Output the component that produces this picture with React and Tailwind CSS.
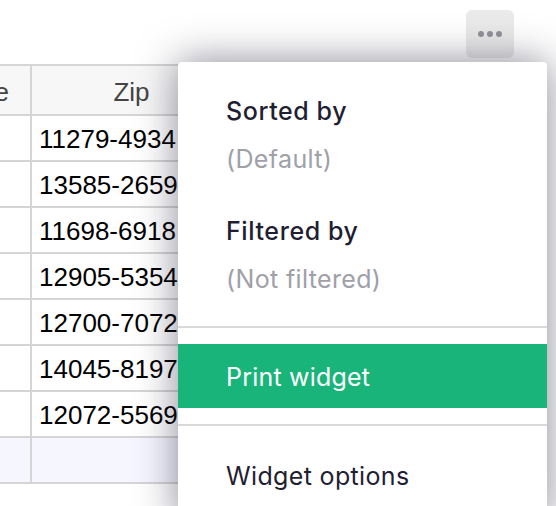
const zips = ['11279-4934', '13585-2659', '11698-6918', '12905-5354', '12700-7072', '14045-8197', '12072-5569'];

function Row({ zip }) {
  return (
    <div className="flex h-[46px] border-b-2 border-[#d5d5d5]">
      <div className="w-[32px] shrink-0 border-r-2 border-[#d5d5d5]" />
      <div className="flex-1 pl-[7px] text-[26px] leading-[46px] text-black">{zip}</div>
    </div>
  );
}

export default function App() {
  return (
    <div className="relative h-[506px] w-[556px] overflow-hidden bg-white font-['Liberation_Sans',sans-serif]">
      {/* table behind the menu */}
      <div className="w-[240px] pt-[64px]">
        <div className="flex h-[52px] border-y-2 border-[#d5d5d5] bg-[#f7f7f7] text-[26px] leading-[52px] text-[#444]">
          <div className="flex w-[32px] shrink-0 justify-end overflow-hidden border-r-2 border-[#d5d5d5] pr-[21px]">
            <span>e</span>
          </div>
          <div className="flex-1 pr-[9px] text-center">Zip</div>
        </div>
        {zips.map((zip) => (
          <Row key={zip} zip={zip} />
        ))}
        <div className="flex h-[46px] border-b-2 border-[#d5d5d5] bg-[#f5f6ff]">
          <div className="w-[32px] shrink-0 border-r-2 border-[#d5d5d5]" />
        </div>
      </div>

      <button className="absolute left-[466px] top-[10px] z-0 flex h-[48px] w-[48px] items-center justify-center gap-[3px] rounded-[6px] bg-[#eaeaea]">
        <span className="h-[6px] w-[6px] rounded-full bg-[#929299]" />
        <span className="h-[6px] w-[6px] rounded-full bg-[#929299]" />
        <span className="h-[6px] w-[6px] rounded-full bg-[#929299]" />
      </button>

      {/* dropdown */}
      <div className="absolute left-[178px] top-[62px] z-10 h-[460px] w-[369px] rounded-[4px] bg-white pt-[32px] font-['Inter',sans-serif] text-[25px] tracking-[0.35px] text-[#1f1e33] shadow-[0_0_40px_rgba(38,38,60,0.55)]">
        <div className="px-[48px] font-medium leading-[34px] tracking-[0.6px]">Sorted by</div>
        <div className="mt-[14px] px-[48px] leading-[34px] text-[#a0a0a8]">(Default)</div>
        <div className="mt-[38px] px-[48px] font-medium leading-[34px] tracking-[0.6px]">Filtered by</div>
        <div className="mt-[14px] px-[48px] leading-[34px] text-[#a0a0a8]">(Not filtered)</div>
        <div className="mt-[30px] h-[2px] bg-[#d9d9d9]" />
        <div className="mt-[16px] h-[64px] bg-[#18b479] px-[48px] leading-[67px] tracking-[0.2px] text-white">Print widget</div>
        <div className="mt-[16px] h-[2px] bg-[#d9d9d9]" />
        <div className="mt-[33px] px-[48px] leading-[34px]">Widget options</div>
      </div>
    </div>
  );
}
